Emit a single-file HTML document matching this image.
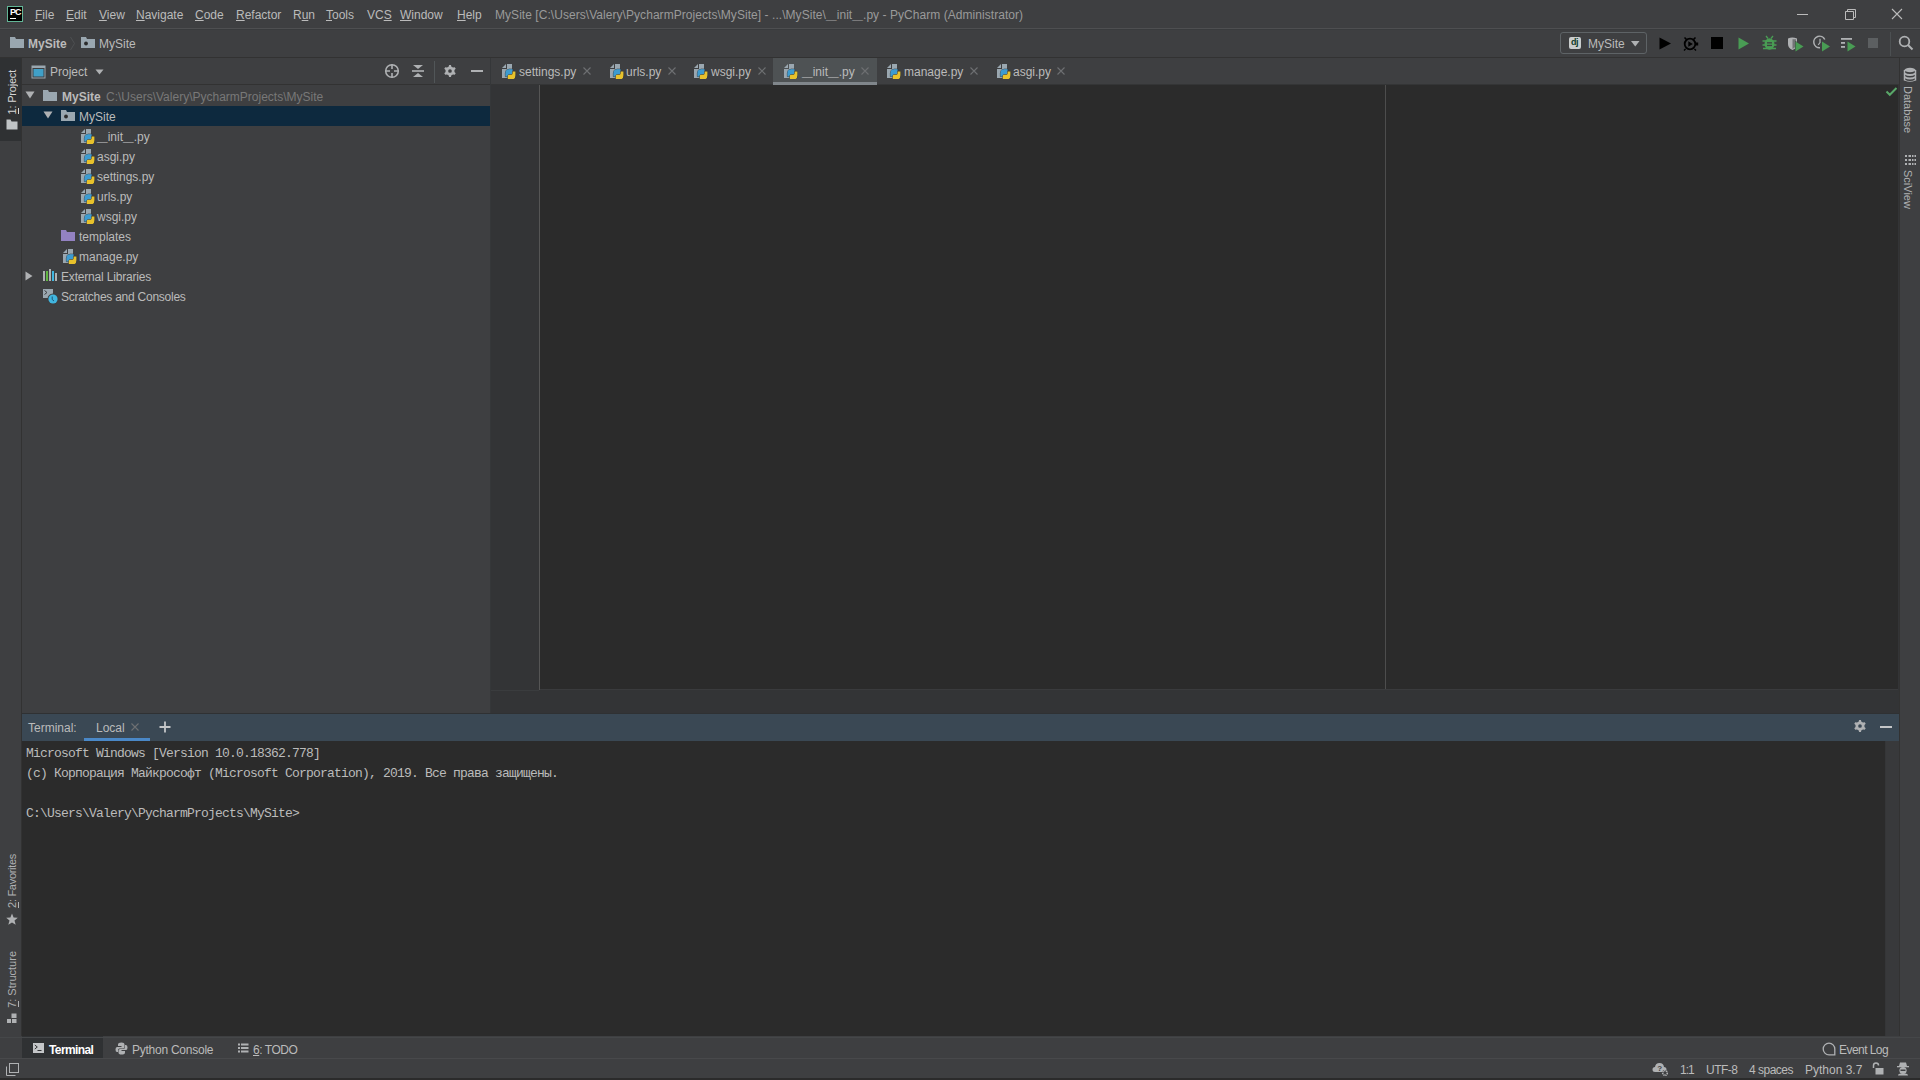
<!DOCTYPE html>
<html><head><meta charset="utf-8">
<style>
*{box-sizing:border-box}
html,body{margin:0;padding:0}
body{width:1920px;height:1080px;overflow:hidden;position:relative;background:#3E3F41;font-family:"Liberation Sans",sans-serif;font-size:12px;color:#BBBBBB}
.a{position:absolute}
.t{position:absolute;white-space:pre;line-height:14px}
.mono{font-family:"Liberation Mono",monospace}
.vl{position:absolute;white-space:pre;writing-mode:vertical-rl;transform:rotate(180deg);font-size:11px;line-height:12px}
.vr{position:absolute;white-space:pre;writing-mode:vertical-rl;font-size:11px;line-height:12px}
svg{position:absolute;overflow:visible}
u{text-decoration:underline;text-underline-offset:1px;text-decoration-thickness:1px}
</style></head><body>

<svg width="0" height="0" style="position:absolute">
<defs>
<symbol id="pyf" viewBox="0 0 16 16">
 <path d="M1 5 L5 1 L5 5 Z" fill="#9AA7B0"/>
 <path d="M6 1 H11 V6 H11 V15 H1 V6 H6 Z" fill="#9AA7B0"/>
 <path d="M4.4 13.6 V10 Q4.4 6.2 8.2 6.2 H11.6 V9.6 Q11.6 11.4 9.8 11.4 H8.2 Q7.2 11.4 7.2 12.4 V13.6 Z" fill="#3C9BD0" stroke="#34393C" stroke-width="0.9" paint-order="stroke"/>
 <path d="M14.4 8.4 V12.2 Q14.4 16.6 10.1 16.6 H6.8 V13.2 Q6.8 11.8 8.2 11.8 H10 Q11.6 11.8 11.6 10.2 V8.4 Z" fill="#E8C22C" stroke="#34393C" stroke-width="0.9" paint-order="stroke"/>
</symbol>
<symbol id="fold" viewBox="0 0 16 16">
 <path d="M1 2 H6 L7 4 H15 V13 H1 Z" fill="#9AA7B0"/>
</symbol>
<symbol id="modf" viewBox="0 0 16 16">
 <path d="M1 2 H6 L7 4 H15 V13 H1 Z" fill="#9AA7B0"/>
 <circle cx="6" cy="8.5" r="1.9" fill="#2B2B2B"/>
</symbol>
<symbol id="gear" viewBox="0 0 16 16"><path fill="#AFB1B3" fill-rule="evenodd" d="M6.37 3.06 L6.94 1.08 L9.06 1.08 L9.63 3.06 L11.46 4.12 L13.46 3.62 L14.52 5.46 L13.09 6.95 L13.09 9.05 L14.52 10.54 L13.46 12.38 L11.46 11.88 L9.63 12.94 L9.06 14.92 L6.94 14.92 L6.37 12.94 L4.54 11.88 L2.54 12.38 L1.48 10.54 L2.91 9.05 L2.91 6.95 L1.48 5.46 L2.54 3.62 L4.54 4.12Z M10.10 8.00 A2.1 2.1 0 1 0 5.90 8.00 A2.1 2.1 0 1 0 10.10 8.00Z"/></symbol>
<symbol id="tdown" viewBox="0 0 10 8">
 <path d="M0.5 0.5 H9.5 L5 7.5 Z" fill="#AFB1B3"/>
</symbol>
<symbol id="tright" viewBox="0 0 8 10">
 <path d="M0.5 0.5 V9.5 L7.5 5 Z" fill="#AFB1B3"/>
</symbol>
<symbol id="xcl" viewBox="0 0 8 8">
 <path d="M0.5 0.5 L7.5 7.5 M7.5 0.5 L0.5 7.5" stroke="#6E7072" stroke-width="1.1" fill="none"/>
</symbol>
</defs>
</svg>

<!-- ===== title bar ===== -->
<div class="a" style="left:0;top:0;width:1920px;height:28px;background:#3E3F41"></div>
<div class="a" style="left:0;top:28px;width:1920px;height:1px;background:#4E4F51"></div>
<div class="a" style="left:0;top:29px;width:1920px;height:1px;background:#393B3D"></div>


<!-- title contents -->
<div class="a" style="left:7px;top:6px;width:16px;height:16px;background:#000;border:1px solid #62B596"></div>
<div class="t" style="left:10px;top:7px;font-size:9px;font-weight:bold;color:#fff;letter-spacing:-0.9px;line-height:10px">PC</div>
<div class="a" style="left:10px;top:18px;width:6px;height:1px;background:#fff"></div>

<div class="t" style="left:35px;top:8px"><u>F</u>ile</div>
<div class="t" style="left:66px;top:8px"><u>E</u>dit</div>
<div class="t" style="left:99px;top:8px"><u>V</u>iew</div>
<div class="t" style="left:136px;top:8px"><u>N</u>avigate</div>
<div class="t" style="left:195px;top:8px"><u>C</u>ode</div>
<div class="t" style="left:236px;top:8px"><u>R</u>efactor</div>
<div class="t" style="left:293px;top:8px">R<u>u</u>n</div>
<div class="t" style="left:326px;top:8px"><u>T</u>ools</div>
<div class="t" style="left:367px;top:8px">VC<u>S</u></div>
<div class="t" style="left:400px;top:8px"><u>W</u>indow</div>
<div class="t" style="left:457px;top:8px"><u>H</u>elp</div>
<div class="t" style="left:495px;top:8px;color:#9A9A9A;letter-spacing:0.05px">MySite [C:\Users\Valery\PycharmProjects\MySite] - ...\MySite\<span style="font-size:9.6px">__</span>init<span style="font-size:9.6px">__</span>.py - PyCharm (Administrator)</div>

<div class="a" style="left:1797px;top:14px;width:11px;height:1px;background:#BBBBBB"></div>
<svg style="left:1844px;top:8px" width="14" height="13"><path d="M1.5 3.5 H9.5 V11.5 H1.5 Z M3.5 3.5 V1.5 H11.5 V9.5 H9.5" stroke="#BBBBBB" fill="none"/></svg>
<svg style="left:1891px;top:8px" width="12" height="12"><path d="M1 1 L11 11 M11 1 L1 11" stroke="#BBBBBB" stroke-width="1.1" fill="none"/></svg>

<!-- ===== nav bar ===== -->
<div class="a" style="left:0;top:57px;width:1920px;height:1px;background:#323232"></div>


<!-- nav contents -->
<svg style="left:9px;top:35px" width="16" height="16"><use href="#fold"/></svg>
<div class="t" style="left:28px;top:37px;font-weight:bold;color:#BBBBBB">MySite</div>
<svg style="left:69px;top:35px" width="8" height="16"><path d="M1.5 2 L5.5 8.5 L1.5 15" stroke="#4E5052" fill="none"/></svg>
<svg style="left:80px;top:35px" width="16" height="16"><use href="#modf"/></svg>
<div class="t" style="left:99px;top:37px">MySite</div>


<!-- toolbar right -->
<div class="a" style="left:1560px;top:32px;width:87px;height:22px;border:1px solid #5E6366;border-radius:3px"></div>
<div class="a" style="left:1569px;top:37px;width:12px;height:12px;background:#C9CDCD;border-radius:2px"></div>
<div class="t" style="left:1571px;top:37px;font-size:9px;line-height:10px;font-weight:bold;color:#0E3B2A;letter-spacing:-0.4px">dj</div>
<div class="t" style="left:1588px;top:37px">MySite</div>
<svg style="left:1631px;top:41px" width="9" height="6"><path d="M0 0 H8.5 L4.25 5.5 Z" fill="#AFB1B3"/></svg>
<svg style="left:1659px;top:37px" width="13" height="13"><path d="M0.5 0.5 L12 6.5 L0.5 12.5 Z" fill="#000"/></svg>
<svg style="left:1682px;top:36px" width="18" height="15"><circle cx="8" cy="8" r="5.3" stroke="#000" stroke-width="1.8" fill="none"/><path d="M6.3 5.2 L10.8 8 L6.3 10.8 Z" fill="#000"/><path d="M2.5 1.5 L4.5 3.5 M13.5 1.5 L11.5 3.5" stroke="#000" stroke-width="1.6"/><rect x="13.2" y="6.5" width="3" height="3" fill="#000"/><path d="M3.5 13 L2 14.5 M12.5 13 L14 14.5" stroke="#000" stroke-width="1.4"/></svg>
<div class="a" style="left:1711px;top:37px;width:12px;height:12px;background:#000"></div>
<svg style="left:1738px;top:37px" width="12" height="13"><path d="M0.5 0.5 L11 6.5 L0.5 12.5 Z" fill="#499C54"/></svg>
<svg style="left:1762px;top:35px" width="15" height="16"><path d="M4 1 L6 3.5 M11 1 L9 3.5" stroke="#499C54" stroke-width="1.3"/><ellipse cx="7.5" cy="9" rx="5" ry="5.8" fill="#499C54"/><path d="M0.5 6 H14.5 M0.5 10 H14.5 M1 13.5 H14" stroke="#499C54" stroke-width="1.5"/><rect x="5" y="7.2" width="5" height="1.3" fill="#3E3F41"/><rect x="5" y="9.8" width="5" height="1.3" fill="#3E3F41"/></svg>
<svg style="left:1787px;top:36px" width="18" height="16"><path d="M1 2.5 Q5 0.3 10 2.5 V8 Q10 12 5.5 14 Q1 12 1 8 Z" fill="#AFB1B3"/><path d="M5.5 3.2 V13 Q9 11.3 9 8 V3.2 Z" fill="#3E3F41" opacity="0.55"/><path d="M8.5 5.5 L16.5 10.5 L8.5 15.5 Z" fill="#499C54" stroke="#3E3F41" stroke-width="1" paint-order="stroke"/></svg>
<svg style="left:1813px;top:35px" width="18" height="17"><path d="M11.8 4.5 A5.8 5.8 0 1 0 7 12.8" stroke="#AFB1B3" stroke-width="1.5" fill="none"/><path d="M7 3.8 V7.5 L5.2 10" stroke="#AFB1B3" stroke-width="1.2" fill="none"/><path d="M9 6.5 L17 11.5 L9 16.5 Z" fill="#499C54" stroke="#3E3F41" stroke-width="1" paint-order="stroke"/></svg>
<svg style="left:1840px;top:36px" width="17" height="16"><rect x="1" y="2" width="11" height="1.8" fill="#AFB1B3"/><rect x="1" y="6" width="4" height="1.8" fill="#AFB1B3"/><rect x="1" y="10" width="4" height="1.8" fill="#AFB1B3"/><path d="M7.5 5.5 L15.5 10.5 L7.5 15.5 Z" fill="#499C54"/></svg>
<div class="a" style="left:1868px;top:38px;width:10px;height:10px;background:#5C5F61"></div>
<div class="a" style="left:1890px;top:32px;width:1px;height:24px;background:#4C5052"></div>
<svg style="left:1898px;top:35px" width="16" height="16"><circle cx="6.5" cy="6.5" r="4.8" stroke="#AFB1B3" stroke-width="1.8" fill="none"/><path d="M10 10 L14.5 14.5" stroke="#AFB1B3" stroke-width="2"/></svg>

<!-- ===== left stripe ===== -->
<div class="a" style="left:0;top:58px;width:21px;height:978px;background:#3E3F41"></div>
<div class="a" style="left:0;top:58px;width:21px;height:83px;background:#2F3133"></div>
<div class="a" style="left:21px;top:58px;width:1px;height:978px;background:#323232"></div>

<!-- ===== project panel ===== -->
<div class="a" style="left:22px;top:58px;width:468px;height:656px;background:#3E3F41"></div>
<div class="a" style="left:22px;top:84px;width:468px;height:1px;background:#323232"></div>
<div class="a" style="left:490px;top:58px;width:1px;height:656px;background:#353739"></div>
<div class="a" style="left:22px;top:106px;width:468px;height:20px;background:#0D293E"></div>


<!-- project header -->
<svg style="left:31px;top:65px" width="15" height="14"><rect x="0.5" y="0.5" width="14" height="13" fill="#9AA7B0"/><rect x="1.5" y="3" width="12" height="9.5" fill="#3E3F41"/><rect x="2.5" y="4" width="10" height="7.5" fill="#40A0C8"/></svg>
<div class="t" style="left:50px;top:65px">Project</div>
<svg style="left:95px;top:69px" width="10" height="8"><path d="M0.5 0.5 H8.5 L4.5 5.5 Z" fill="#AFB1B3"/></svg>
<svg style="left:384px;top:63px" width="16" height="16"><circle cx="8" cy="8" r="6.3" stroke="#AFB1B3" stroke-width="1.6" fill="none"/><path d="M8 1.5 V6 M8 10 V14.5 M1.5 8 H6 M10 8 H14.5" stroke="#AFB1B3" stroke-width="1.6"/></svg>
<svg style="left:411px;top:63px" width="14" height="16"><path d="M2 2 H12 L7 6 Z M2 14 H12 L7 10 Z" fill="#AFB1B3"/><rect x="1" y="7.2" width="12" height="1.6" fill="#AFB1B3"/></svg>
<div class="a" style="left:434px;top:61px;width:1px;height:22px;background:#515658"></div>
<svg style="left:444px;top:65px" width="14" height="14" viewBox="1 1 14 14"><use href="#gear"/></svg>
<div class="a" style="left:471px;top:70px;width:12px;height:2px;background:#AFB1B3"></div>

<!-- tree -->
<svg style="left:25px;top:91px" width="10" height="8"><use href="#tdown"/></svg>
<svg style="left:42px;top:88px" width="16" height="16"><use href="#fold"/></svg>
<div class="t" style="left:62px;top:90px;font-weight:bold">MySite</div>
<div class="t" style="left:106px;top:90px;color:#787878">C:\Users\Valery\PycharmProjects\MySite</div>

<svg style="left:43px;top:111px" width="10" height="8"><use href="#tdown"/></svg>
<svg style="left:60px;top:108px" width="16" height="16"><use href="#modf"/></svg>
<div class="t" style="left:79px;top:110px">MySite</div>
<svg style="left:80px;top:128px" width="16" height="16"><use href="#pyf"/></svg>
<div class="t" style="left:97px;top:130px"><span style="font-size:9.6px">__</span>init<span style="font-size:9.6px">__</span>.py</div>
<svg style="left:80px;top:148px" width="16" height="16"><use href="#pyf"/></svg>
<div class="t" style="left:97px;top:150px">asgi.py</div>
<svg style="left:80px;top:168px" width="16" height="16"><use href="#pyf"/></svg>
<div class="t" style="left:97px;top:170px">settings.py</div>
<svg style="left:80px;top:188px" width="16" height="16"><use href="#pyf"/></svg>
<div class="t" style="left:97px;top:190px">urls.py</div>
<svg style="left:80px;top:208px" width="16" height="16"><use href="#pyf"/></svg>
<div class="t" style="left:97px;top:210px">wsgi.py</div>

<svg style="left:60px;top:228px" width="16" height="16"><path d="M1 2 H6 L7 4 H15 V13 H1 Z" fill="#9382C2"/></svg>
<div class="t" style="left:79px;top:230px">templates</div>
<svg style="left:62px;top:248px" width="16" height="16"><use href="#pyf"/></svg>
<div class="t" style="left:79px;top:250px">manage.py</div>

<svg style="left:25px;top:271px" width="8" height="10"><use href="#tright"/></svg>
<svg style="left:42px;top:268px" width="16" height="14"><rect x="1" y="3" width="2" height="10" fill="#AFB1B3"/><rect x="4" y="3" width="2" height="10" fill="#62B543"/><rect x="7" y="1" width="2" height="12" fill="#AFB1B3"/><rect x="10" y="3" width="2" height="10" fill="#40B6E0"/><rect x="13" y="5" width="2" height="8" fill="#AFB1B3"/></svg>
<div class="t" style="left:61px;top:270px;letter-spacing:-0.18px">External Libraries</div>
<svg style="left:42px;top:288px" width="16" height="18"><rect x="1" y="1" width="10" height="9" fill="#9AA7B0"/><path d="M2.5 2.5 L5 4.5 L2.5 6.5" stroke="#3E3F41" stroke-width="1" fill="none"/><circle cx="11" cy="11" r="5.5" fill="#3E3F41"/><circle cx="11" cy="11" r="4.6" fill="#40B6E0"/><path d="M10.2 8.5 V11.5 L12 13" stroke="#1B4B6B" stroke-width="0.9" fill="none"/></svg>
<div class="t" style="left:61px;top:290px;letter-spacing:-0.25px">Scratches and Consoles</div>

<!-- ===== editor ===== -->
<div class="a" style="left:491px;top:84px;width:1408px;height:1px;background:#343536"></div>
<div class="a" style="left:491px;top:85px;width:1408px;height:629px;background:#333436"></div>
<div class="a" style="left:540px;top:85px;width:1358px;height:605px;background:#2B2B2B"></div>
<div class="a" style="left:539px;top:85px;width:1px;height:605px;background:#555555"></div>
<div class="a" style="left:1385px;top:85px;width:1px;height:605px;background:#4D4D4D"></div>
<div class="a" style="left:491px;top:690px;width:48px;height:1px;background:#3A3C3E"></div><div class="a" style="left:540px;top:689px;width:1358px;height:1px;background:#3A3B3D"></div>
<div class="a" style="left:22px;top:713px;width:1877px;height:1px;background:#2F3133"></div>


<!-- editor tabs -->
<div class="a" style="left:773px;top:58px;width:104px;height:26px;background:#4E5254"></div>
<div class="a" style="left:773px;top:82px;width:104px;height:3px;background:#80868B"></div>
<svg style="left:501px;top:63px" width="16" height="16"><use href="#pyf"/></svg>
<div class="t" style="left:519px;top:65px">settings.py</div>
<svg style="left:583px;top:67px" width="8" height="8"><use href="#xcl"/></svg>
<svg style="left:609px;top:63px" width="16" height="16"><use href="#pyf"/></svg>
<div class="t" style="left:626px;top:65px">urls.py</div>
<svg style="left:668px;top:67px" width="8" height="8"><use href="#xcl"/></svg>
<svg style="left:693px;top:63px" width="16" height="16"><use href="#pyf"/></svg>
<div class="t" style="left:711px;top:65px">wsgi.py</div>
<svg style="left:758px;top:67px" width="8" height="8"><use href="#xcl"/></svg>
<svg style="left:783px;top:63px" width="16" height="16"><use href="#pyf"/></svg>
<div class="t" style="left:802px;top:65px"><span style="font-size:9.6px">__</span>init<span style="font-size:9.6px">__</span>.py</div>
<svg style="left:861px;top:67px" width="8" height="8"><use href="#xcl"/></svg>
<svg style="left:886px;top:63px" width="16" height="16"><use href="#pyf"/></svg>
<div class="t" style="left:904px;top:65px">manage.py</div>
<svg style="left:970px;top:67px" width="8" height="8"><use href="#xcl"/></svg>
<svg style="left:996px;top:63px" width="16" height="16"><use href="#pyf"/></svg>
<div class="t" style="left:1013px;top:65px">asgi.py</div>
<svg style="left:1057px;top:67px" width="8" height="8"><use href="#xcl"/></svg>

<svg style="left:1885px;top:86px" width="14" height="11"><path d="M1.5 5.5 L4.8 8.8 L11.5 2" stroke="#59A869" stroke-width="2" fill="none"/></svg>

<!-- ===== right stripe ===== -->
<div class="a" style="left:1899px;top:58px;width:1px;height:978px;background:#323232"></div>


<!-- left stripe contents -->
<div class="vl" style="left:6px;top:70px;color:#D6D6D6;letter-spacing:-0.2px">1: Project</div><div class="a" style="left:18px;top:108px;width:1px;height:6px;background:#D6D6D6"></div>
<svg style="left:6px;top:119px" width="12" height="11"><path d="M0.5 0.5 H4.5 L5.5 2.5 H11.5 V10.5 H0.5 Z" fill="#C0C4C6"/></svg>
<div class="vl" style="left:6px;top:854px;color:#AFB1B3;letter-spacing:-0.3px">2: Favorites</div><div class="a" style="left:18px;top:902px;width:1px;height:6px;background:#AFB1B3"></div>
<svg style="left:6px;top:913px" width="12" height="13"><path d="M6 0.5 L7.6 4.6 L11.8 4.8 L8.5 7.5 L9.7 11.8 L6 9.4 L2.3 11.8 L3.5 7.5 L0.2 4.8 L4.4 4.6 Z" fill="#AFB1B3"/></svg>
<div class="vl" style="left:6px;top:951px;color:#AFB1B3">7: Structure</div><div class="a" style="left:18px;top:1001px;width:1px;height:6px;background:#AFB1B3"></div>
<svg style="left:6px;top:1013px" width="12" height="11"><rect x="5.5" y="0.5" width="5" height="4.5" fill="#AFB1B3"/><rect x="1" y="6" width="4" height="4" fill="#AFB1B3"/><rect x="6" y="6" width="4.5" height="4" fill="#AFB1B3"/></svg>

<!-- right stripe contents -->
<svg style="left:1903px;top:67px" width="14" height="16"><ellipse cx="7" cy="3" rx="5.5" ry="2.2" fill="#AFB1B3"/><path d="M1.5 5.5 Q7 8.5 12.5 5.5 V7.5 Q7 10.5 1.5 7.5 Z M1.5 9 Q7 12 12.5 9 V11 Q7 14 1.5 11 Z M1.5 12.5 Q7 15.5 12.5 12.5 V13.5 Q7 16 1.5 13.5Z" fill="#AFB1B3"/><path d="M1.5 3 V13.5 M12.5 3 V13.5" stroke="#AFB1B3" stroke-width="1.5"/></svg>
<div class="vr" style="left:1902px;top:86px;color:#AFB1B3">Database</div>
<svg style="left:1904px;top:154px" width="13" height="12"><rect x="1" y="1" width="2" height="2" fill="#AFB1B3"/><rect x="1" y="5" width="2" height="2" fill="#AFB1B3"/><rect x="1" y="9" width="2" height="2" fill="#AFB1B3"/><rect x="4.5" y="1" width="7.5" height="2" fill="#AFB1B3"/><rect x="4.5" y="5" width="7.5" height="2" fill="#AFB1B3"/><rect x="4.5" y="9" width="7.5" height="2" fill="#AFB1B3"/><rect x="7" y="1" width="1" height="10" fill="#3E3F41"/><rect x="9.5" y="1" width="1" height="10" fill="#3E3F41"/></svg>
<div class="vr" style="left:1902px;top:170px;color:#AFB1B3">SciView</div>

<!-- ===== terminal ===== -->
<div class="a" style="left:22px;top:714px;width:1877px;height:27px;background:#3A4854"></div>
<div class="a" style="left:22px;top:741px;width:1877px;height:295px;background:#2B2B2B"></div>
<div class="a" style="left:1885px;top:741px;width:14px;height:295px;background:#38393B;border-left:1px solid #353638"></div>

<!-- ===== bottom bar & status ===== -->
<div class="a" style="left:0;top:1036px;width:1920px;height:22px;background:#3E3F41"></div>
<div class="a" style="left:22px;top:1036px;width:81px;height:22px;background:#2F3133"></div>
<div class="a" style="left:0;top:1058px;width:1920px;height:1px;background:#48494B"></div>
<div class="a" style="left:0;top:1037px;width:1920px;height:1px;background:#454749"></div>
<div class="a" style="left:0;top:1078px;width:1920px;height:2px;background:#2B2B2B"></div>


<!-- terminal contents -->
<div class="t" style="left:28px;top:721px">Terminal:</div>
<div class="t" style="left:96px;top:721px">Local</div>
<svg style="left:131px;top:723px" width="8" height="8"><use href="#xcl"/></svg>
<div class="a" style="left:84px;top:738px;width:66px;height:3px;background:#4A88C7"></div>
<svg style="left:159px;top:721px" width="12" height="12"><path d="M6 0.5 V11.5 M0.5 6 H11.5" stroke="#C4C6C8" stroke-width="1.8"/></svg>
<svg style="left:1854px;top:720px" width="14" height="14" viewBox="1 1 14 14"><use href="#gear"/></svg>
<div class="a" style="left:1880px;top:726px;width:12px;height:2px;background:#C4C6C8"></div>

<div class="t mono" style="left:26px;top:744px;font-size:13px;letter-spacing:-0.8px;line-height:20px;color:#BBBBBB">Microsoft Windows [Version 10.0.18362.778]
(c) Корпорация Майкрософт (Microsoft Corporation), 2019. Все права защищены.

C:\Users\Valery\PycharmProjects\MySite&gt;</div>

<!-- bottom bar contents -->
<svg style="left:33px;top:1043px" width="12" height="11"><rect x="0" y="0" width="11" height="10" fill="#C4C6C8"/><path d="M1.8 2 L4.3 4 L1.8 6" stroke="#2F3133" stroke-width="1" fill="none"/><rect x="4.5" y="7" width="4" height="1" fill="#2F3133"/></svg>
<div class="t" style="left:49px;top:1043px;color:#FFFFFF;font-weight:bold;letter-spacing:-0.6px">Terminal</div>
<svg style="left:115px;top:1042px" width="13" height="13"><path d="M6.5 0.5 Q3 0.5 3 2.5 V4 H6.5 V5 H2 Q0.5 5 0.5 7.5 Q0.5 10 2 10 H3 V8 Q3 6.5 4.5 6.5 H8 Q9.5 6.5 9.5 5 V2.5 Q9.5 0.5 6.5 0.5Z" fill="#AFB1B3"/><path d="M6.5 12.5 Q10 12.5 10 10.5 V9 H6.5 V8 H11 Q12.5 8 12.5 5.5 Q12.5 3 11 3 H10 V5 Q10 7 8.5 7 H5 Q3.5 7 3.5 8.5 V10.5 Q3.5 12.5 6.5 12.5Z" fill="#AFB1B3"/></svg>
<div class="t" style="left:132px;top:1043px;letter-spacing:-0.25px">Python Console</div>
<svg style="left:238px;top:1043px" width="11" height="10"><rect x="0" y="0.5" width="2" height="2" fill="#AFB1B3"/><rect x="0" y="4" width="2" height="2" fill="#AFB1B3"/><rect x="0" y="7.5" width="2" height="2" fill="#AFB1B3"/><rect x="3" y="0.5" width="7.5" height="2" fill="#AFB1B3"/><rect x="3" y="4" width="7.5" height="2" fill="#AFB1B3"/><rect x="3" y="7.5" width="7.5" height="2" fill="#AFB1B3"/></svg>
<div class="t" style="left:253px;top:1043px;letter-spacing:-0.45px"><u>6</u>: TODO</div>
<svg style="left:1822px;top:1042px" width="14" height="14"><path d="M12.8 12.8 H7 A5.8 5.8 0 1 1 12.8 7 Z" stroke="#AFB1B3" stroke-width="1.3" fill="none"/></svg>
<div class="t" style="left:1839px;top:1043px;letter-spacing:-0.55px">Event Log</div>

<!-- status bar -->
<svg style="left:6px;top:1063px" width="13" height="13"><rect x="3.5" y="0.5" width="9" height="9" stroke="#AFB1B3" fill="none"/><path d="M0.5 3.5 V12.5 H9.5" stroke="#AFB1B3" fill="none"/></svg>
<svg style="left:1652px;top:1061px" width="18" height="16"><path d="M3 11 Q0.5 11 0.5 8.5 Q0.5 6 3 6 Q3.5 2 7.5 2 Q11.5 2 12 6 Q14.5 6 14.5 8.5 Q14.5 11 12 11 Z" fill="#AFB1B3"/><text x="5.3" y="9.5" font-size="8" font-weight="bold" fill="#3E3F41" font-family="Liberation Sans">?</text><circle cx="13" cy="12" r="3" fill="#3E3F41"/><circle cx="13" cy="12" r="2.3" stroke="#AFB1B3" stroke-width="1.6" fill="none" stroke-dasharray="1.2 0.6"/></svg>
<div class="t" style="left:1680px;top:1063px;letter-spacing:-1px">1:1</div>
<div class="t" style="left:1706px;top:1063px;letter-spacing:-0.5px">UTF-8</div>
<div class="t" style="left:1749px;top:1063px;letter-spacing:-0.5px">4 spaces</div>
<div class="t" style="left:1805px;top:1063px">Python 3.7</div>
<svg style="left:1871px;top:1062px" width="13" height="13"><path d="M2.5 6 V3.5 Q2.5 1 5 1 Q7.5 1 7.5 3.5" stroke="#AFB1B3" stroke-width="1.5" fill="none"/><rect x="4.5" y="6" width="8" height="6.5" fill="#AFB1B3"/></svg>
<svg style="left:1896px;top:1061px" width="14" height="15"><path d="M3 5 L4 1.5 H10 L11 5 Z" fill="#AFB1B3"/><rect x="1" y="5" width="12" height="1.3" fill="#AFB1B3"/><circle cx="7" cy="9.5" r="3.6" fill="#AFB1B3"/><rect x="4.5" y="8.5" width="5" height="1.5" fill="#3E3F41"/><path d="M2 14.5 Q2 12 7 12.5 Q12 12 12 14.5 Z" fill="#AFB1B3"/></svg>

</body></html>
